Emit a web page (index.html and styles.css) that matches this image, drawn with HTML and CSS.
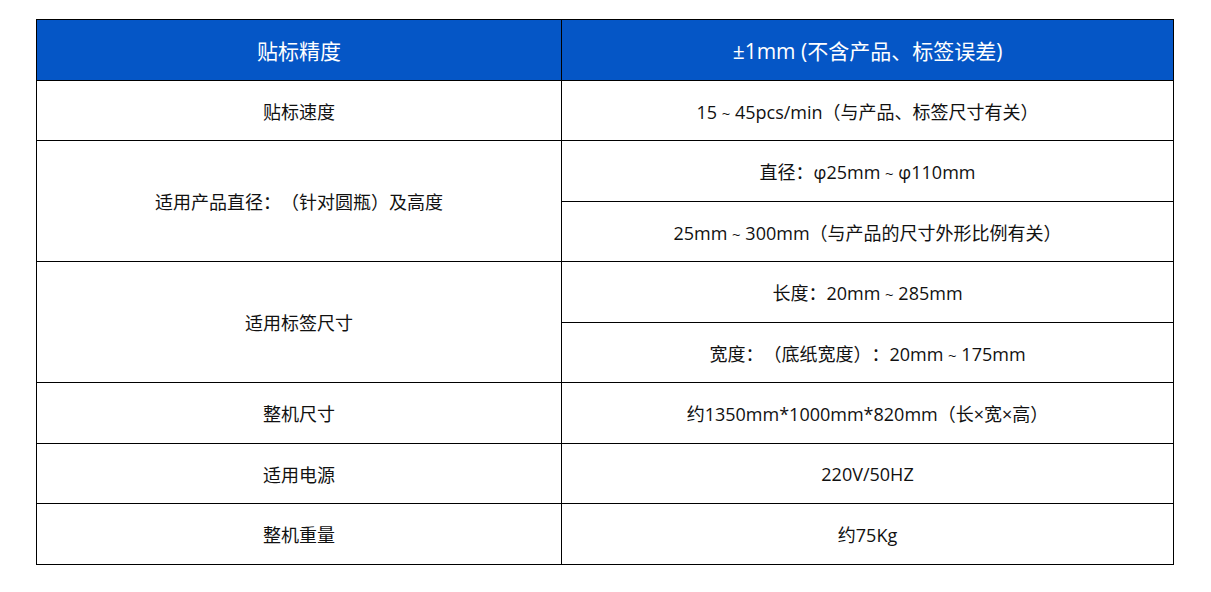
FILE: index.html
```html
<!DOCTYPE html>
<html lang="zh-CN">
<head>
<meta charset="utf-8">
<title>贴标机参数</title>
<link rel="stylesheet" href="styles.css">
</head>
<body>
<div class="wrap">
<table class="spec">
  <colgroup><col class="c1"><col class="c2"></colgroup>
  <thead>
    <tr class="r-a"><th>贴标精度</th><th>±1mm (不含产品、标签误差)</th></tr>
  </thead>
  <tbody>
    <tr class="r-b"><td>贴标速度</td><td>15<span class="tl">~</span>45pcs/min（与产品、标签尺寸有关）</td></tr>
    <tr class="r-a"><td rowspan="2">适用产品直径：（针对圆瓶）及高度</td><td>直径：φ25mm<span class="tl">~</span>φ110mm</td></tr>
    <tr class="r-b"><td>25mm<span class="tl">~</span>300mm（与产品的尺寸外形比例有关）</td></tr>
    <tr class="r-a"><td rowspan="2">适用标签尺寸</td><td>长度：20mm<span class="tl">~</span>285mm</td></tr>
    <tr class="r-b"><td>宽度：（底纸宽度）：20mm<span class="tl">~</span>175mm</td></tr>
    <tr class="r-a"><td>整机尺寸</td><td>约1350mm*1000mm*820mm（长×宽×高）</td></tr>
    <tr class="r-b"><td>适用电源</td><td>220V/50HZ</td></tr>
    <tr class="r-a"><td>整机重量</td><td>约75Kg</td></tr>
  </tbody>
</table>
</div>
</body>
</html>
```
FILE: styles.css
```css
html, body {
  margin: 0;
  padding: 0;
  background: #ffffff;
}
.wrap {
  padding: 19px 0 0 36px;
}
.spec {
  border-collapse: collapse;
  width: 1138px;
  table-layout: fixed;
  font-family: "Open Sans", "Noto Sans CJK SC", sans-serif;
  color: #111111;
  text-spacing-trim: space-all;
}
.c1 { width: 525px; }
.spec th, .spec td {
  border: 1px solid #000;
  text-align: center;
  vertical-align: middle;
  padding: 0;
}
.spec th {
  background: #0556c6;
  color: #ffffff;
  font-weight: normal;
  font-size: 21px;
}
.spec td {
  font-size: 18px;
}
.tl {
  display: inline-block;
  width: 18px;
  text-align: center;
  font-size: 15px;
}
.r-a { height: 61px; }
.r-b { height: 60px; }
```
